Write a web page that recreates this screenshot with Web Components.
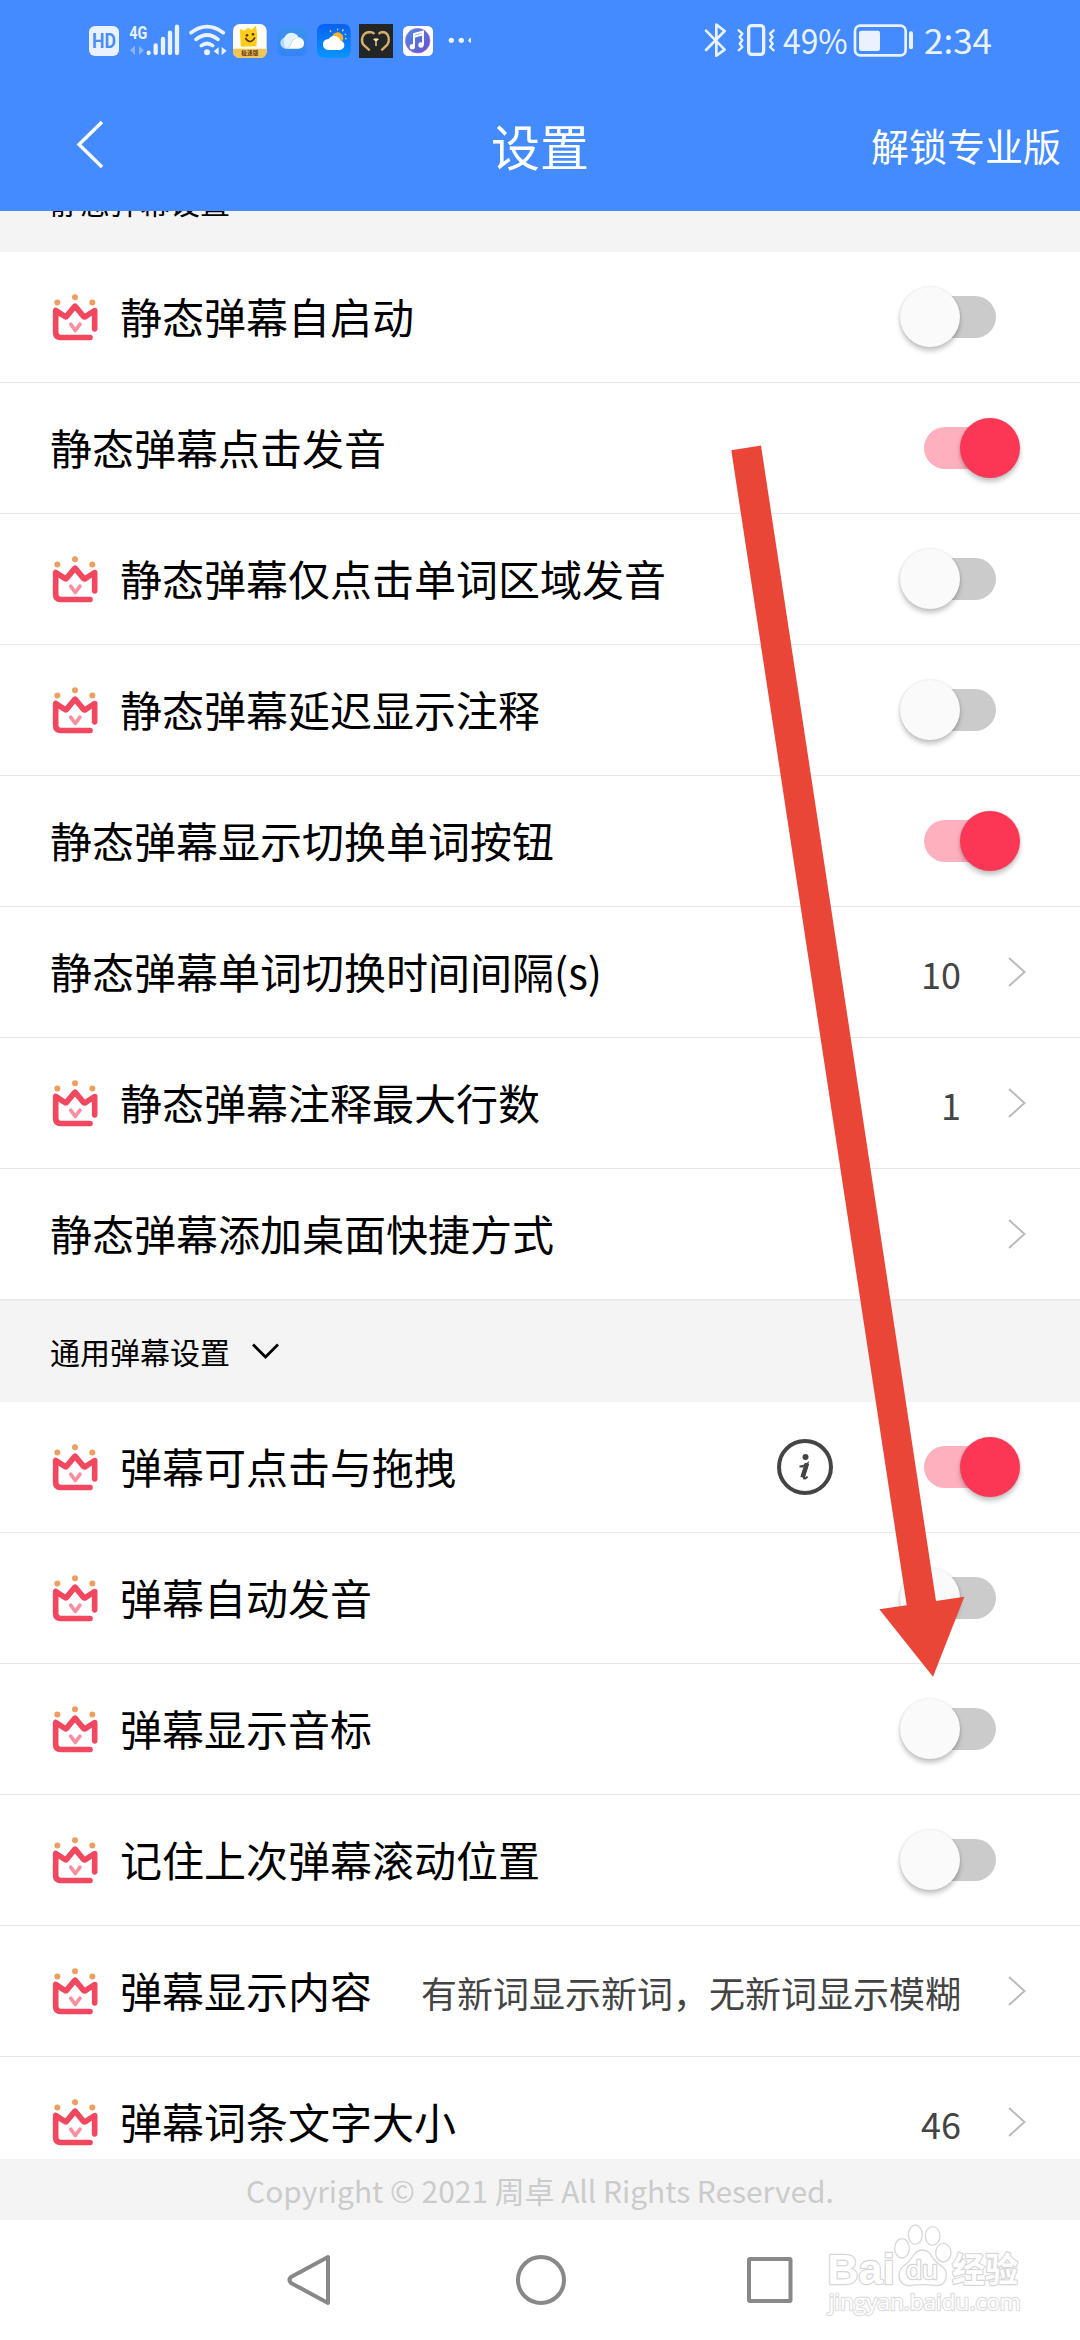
<!DOCTYPE html>
<html lang="zh-CN">
<head>
<meta charset="utf-8">
<title>设置</title>
<style>
html,body{margin:0;padding:0}
body{width:1080px;height:2340px;overflow:hidden;background:#fff;font-family:"Noto Sans CJK SC",sans-serif;color:#000}
</style>
</head>
<body>
<settings-app></settings-app>
<script>
function define(name, html, setup) {
  const tpl = document.createElement('template');
  tpl.innerHTML = html;
  customElements.define(name, class extends HTMLElement {
    connectedCallback() {
      if (this.shadowRoot) return;
      const root = this.attachShadow({mode: 'open'});
      root.append(tpl.content.cloneNode(true));
      if (setup) setup(this, root);
    }
  });
}

define('status-bar', `
<style>
:host{display:flex;height:90px;justify-content:space-between;padding:0 60px 0 70px;box-sizing:border-box;width:1080px}
svg{display:block;height:90px;flex:none}
text{font-family:Roboto,"Noto Sans CJK SC",sans-serif}
.l{width:420px}.r{width:330px}
</style>
<svg class="l" viewBox="0 0 1260 270">
  <defs>
    <linearGradient id="cl" x1="0" y1="0" x2="0" y2="1"><stop offset="0" stop-color="#3b93ef"/><stop offset="1" stop-color="#3484f7"/></linearGradient>
    <linearGradient id="we" x1="0" y1="0" x2="0" y2="1"><stop offset="0" stop-color="#0862f2"/><stop offset="1" stop-color="#0895fd"/></linearGradient>
    <linearGradient id="mu" x1="0" y1="0" x2="1" y2="1"><stop offset="0" stop-color="#4b8ee8"/><stop offset="1" stop-color="#6a50c8"/></linearGradient>
  </defs>
  <rect x="57" y="78" width="90" height="90" rx="18" fill="#e9f2fe"/>
  <text x="66" y="145" font-size="58" font-weight="700" fill="#4a8ff8" textLength="72" lengthAdjust="spacingAndGlyphs">HD</text>
  <text x="178" y="116" font-size="57" font-weight="700" fill="#e9f2fe" textLength="54" lengthAdjust="spacingAndGlyphs">4G</text>
  <path d="M180 150l15-13v28zM207 138v27l15-14z" fill="#86b5fb"/>
  <g stroke="#e9f2fe" stroke-width="13" stroke-linecap="round" fill="none">
    <path d="M236 158v1M257 136v23M279 117v42M300 98v61M321 80v79"/>
    <path d="M363 98q48-36 97 0M378 118q33-26 66 0M394 137q17-13 34 0" stroke-width="11"/>
  </g>
  <circle cx="411" cy="157" r="9" fill="#e9f2fe"/>
  <path d="M431 154l15-13v24zM455 141v25l15-14z" fill="#e9f2fe"/>
  <rect x="489" y="72" width="101" height="102" rx="20" fill="#fffdf5"/>
  <path d="M489 146h101v8q0 20-20 20h-61q-20 0-20-20z" fill="#f2c55b"/>
  <path d="M512 90l12 5 10-9 12 7 10-12 3 22-2 33-42 2z" fill="#ffcd18" stroke="#ffcd18" stroke-width="5" stroke-linejoin="round"/>
  <path d="M526 114q15 22 29-2" stroke="#5b3813" stroke-width="5" fill="none"/><circle cx="531" cy="106" r="4" fill="#5b3813"/><circle cx="549" cy="103" r="4" fill="#5b3813"/>
  <text x="514" y="166" font-size="17" font-weight="700" fill="#5b3813">极速版</text>
  <rect x="621" y="78" width="90" height="90" rx="18" fill="url(#cl)"/>
  <circle cx="648" cy="129" r="17" fill="#b9d9fb"/><path d="M645 146q18 0 20-20 8-12 23-14 14 5 14 18 0 16-18 16z" fill="#fff"/><path d="M642 118q4-20 22-20 18 1 22 15-18 3-23 16-3 13-16 17-6-12-5-28z" fill="#e4f1fe"/>
  <rect x="741" y="72" width="101" height="101" rx="20" fill="url(#we)"/>
  <circle cx="803" cy="114" r="17" fill="#fbb32a"/>
  <path d="M803 91v-5M783 96l-3-5M817 94l3-6M824 104l4-2M825 116h5" stroke="#e8d387" stroke-width="4"/>
  <path d="M775 150q-16-1-16-17 0-15 17-16 6-10 18-9 14 1 17 14 12 2 12 14-1 13-14 14z" fill="#fff"/>
  <rect x="867" y="72" width="102" height="102" fill="#242625"/>
  <path d="M903 151l-19-17q-6-9-3-21 5-16 22-17 10 0 14 6M930 102q4-6 12-6 14 1 18 17 2 12-4 21l-18 17" transform="translate(-4 0)" fill="none" stroke="#d4b06d" stroke-width="7"/>
  <path d="M909 118q9-7 18 0l-7 6v14h-4v-14z" fill="#f2dfae"/>
  <rect x="999" y="78" width="90" height="90" rx="16" fill="#fff"/>
  <circle cx="1043" cy="122" r="37" fill="url(#mu)" stroke="#bd6ee0" stroke-width="2"/>
  <path d="M1032 140v-38l27-7v39M1032 110l27-7" stroke="#fff" stroke-width="6" fill="none"/><circle cx="1027" cy="140" r="8" fill="#fff"/><circle cx="1053" cy="135" r="8" fill="#fff"/>
  <g fill="#e9f2fe"><circle cx="1144" cy="121" r="8"/><circle cx="1174" cy="121" r="8"/><path d="M1203 113q-8 2-8 8t8 8z"/></g>
</svg>
<svg class="r" viewBox="30 0 990 270">
  <g fill="none" stroke="#e9f2fe" stroke-linejoin="round" stroke-linecap="round">
    <path d="M78 92l56 57-25 18V74l25 19-56 57" stroke-width="8"/>
    <rect x="206" y="77" width="45" height="86" rx="9" stroke-width="10"/>
    <path d="M176 91l11 10-8 10 8 10-8 10 8 10-11 10M281 91l-11 10 8 10-8 10 8 10-8 10 11 10" stroke-width="7"/>
    <rect x="525" y="77" width="152" height="89" rx="16" stroke-width="8"/>
  </g>
  <rect x="537" y="92" width="63" height="61" rx="7" fill="#e9f2fe"/>
  <path d="M693 100v42" stroke="#e9f2fe" stroke-width="12" stroke-linecap="round"/>
  <text x="309" y="162" font-size="102" fill="#e9f2fe" textLength="194" lengthAdjust="spacingAndGlyphs" style="font-family:'Noto Sans CJK SC'">49%</text>
  <text x="732" y="162" font-size="102" fill="#e9f2fe" textLength="204" lengthAdjust="spacingAndGlyphs" style="font-family:'Noto Sans CJK SC'">2:34</text>
</svg>`);

define('nav-header', `
<style>
:host{display:grid;grid-template-columns:421px auto 1fr;align-items:center;height:121px;padding:0 19px 11px 70px;box-sizing:border-box;color:#fff}
svg{display:block}
.t{font-size:49px;line-height:60px}
.a{justify-self:end;font-size:38px;line-height:60px}
</style>
<svg width="40" height="54" viewBox="0 0 40 54"><path d="M32 4L9 26.500L32 49" fill="none" stroke="#fff" stroke-width="3.400"/></svg>
<span class="t"><slot></slot></span><span class="a"><slot name="action"></slot></span>`);

define('section-head', `
<style>
:host{display:flex;align-items:center;height:102px;padding:0 0 0 50px;box-sizing:border-box;background:#f4f4f4;font-size:30px;line-height:44px;flex:none;border-top:1px solid #ececec}
span{margin-top:-2px}
svg{margin-left:21px;margin-top:-1px}
</style>
<span><slot></slot></span>
<svg width="28" height="18" viewBox="0 0 28 18"><path d="M2 2.500l12.500 12.500L27 2.500" fill="none" stroke="#000" stroke-width="2.800"/></svg>`);

define('crown-icon', `
<style>:host{display:block;width:50px;height:50px;margin:1px 20px 0 1px;flex:none}svg{display:block}</style>
<svg width="50" height="50" viewBox="63 37.500 150 150">
<g fill="#ed9f62"><circle cx="82" cy="66" r="9"/><circle cx="135" cy="50" r="9"/><circle cx="187" cy="66" r="9"/></g>
<path d="M194 145V90l-29 19q-3 1-5-2l-25-30-25 30q-2 3-5 1L77 90v66q0 15 15 15h88" fill="none" stroke="#f2485f" stroke-width="17" stroke-linejoin="round" stroke-linecap="round"/>
<path d="M122 131l14 19 14-19" fill="none" stroke="#f990a1" stroke-width="11" stroke-linecap="round" stroke-linejoin="round"/></svg>`);

define('toggle-switch', `
<style>
:host{display:flex;align-items:center;width:72px;height:42px;border-radius:21px;background:#cbcbcb;margin-bottom:1px;flex:none}
i{width:60px;height:60px;border-radius:50%;background:#fafafa;flex:none;margin-left:-24px;box-shadow:0 4px 5px rgba(0,0,0,.22),0 0 3px rgba(0,0,0,.12)}
:host([on]){background:#ffb0be}
:host([on]) i{background:#fc3756;margin-left:36px}
</style><i></i>`);

define('info-icon', `
<style>:host{display:block;width:56px;height:56px;margin:0 91px 1px 0}svg{display:block}</style>
<svg width="56" height="56"><circle cx="28" cy="28" r="26" fill="none" stroke="#444" stroke-width="4"/>
<circle cx="28.500" cy="18" r="3" fill="#444"/><path d="M23 27.500q4-.5 7.500-3l-3.500 13q-.5 2.500 1 2 1.500-.5 2.500-2M22.500 27.500h4" fill="none" stroke="#444" stroke-width="2"/><path d="M30 24.500l-4.500 14" stroke="#444" stroke-width="4.500"/></svg>`);

define('setting-row', `
<style>
:host{display:flex;align-items:center;height:131px;box-sizing:border-box;border-bottom:1px solid #e8e8e8;padding-left:50px;flex:none;background:#fff}
.n{font-size:42px;line-height:62px;white-space:nowrap;flex:1;padding-bottom:2px;margin-left:0}
crown-icon + .n{margin-left:-1px}
.v{font-size:36px;line-height:54px;color:#444;white-space:nowrap;padding-top:1px}
.end{display:flex;align-items:center}
.end.sw{padding-right:84px}
.end.link{padding-right:53px}
.c{margin-left:46px;display:block;margin-bottom:1px}
</style>
<span class="n"><slot></slot></span><div class="end"></div>`, (el, root) => {
  if (el.hasAttribute('pro')) root.querySelector('.n').before(document.createElement('crown-icon'));
  const end = root.querySelector('.end');
  if (el.hasAttribute('info')) end.append(document.createElement('info-icon'));
  if (el.hasAttribute('toggle')) {
    end.classList.add('sw');
    const s = document.createElement('toggle-switch');
    if (el.getAttribute('toggle') === 'on') s.setAttribute('on', '');
    end.append(s);
  } else {
    end.classList.add('link');
    end.insertAdjacentHTML('beforeend', '<span class="v"></span><svg class="c" width="20" height="32" viewBox="0 0 20 32"><path d="M2 2l15.500 14L2 30" fill="none" stroke="#bbb" stroke-width="2"/></svg>');
    end.querySelector('.v').textContent = el.getAttribute('value') || '';
  }
});

define('copyright-bar', `
<style>:host{display:flex;height:61px;align-items:center;justify-content:center;background:#f4f4f4;color:#cbcbcb;font-size:29.900px;line-height:44px;flex:none;box-sizing:border-box}</style><span><slot></slot></span>`);

define('system-nav', `
<style>:host{display:flex;height:120px;justify-content:space-between;align-items:center;padding:0 285px 0 286px;background:#fff;flex:none}svg{display:block}</style>
<svg width="50" height="54" fill="none" stroke="#888" stroke-width="4"><path d="M42 4v46L5 30q-3-3 0-6z" stroke-linejoin="round"/></svg>
<svg width="54" height="54" fill="none" stroke="#888" stroke-width="4"><circle cx="27" cy="27" r="23"/></svg>
<svg width="50" height="54" fill="none" stroke="#888" stroke-width="4"><rect x="4" y="6" width="41.500" height="42" rx="1"/></svg>`);

define('pointer-arrow', `
<style>:host{position:absolute;left:0;top:0;width:1080px;height:2340px;pointer-events:none}svg{display:block}</style>
<svg width="1080" height="2340"><path d="M731.300 450.300L761 445.500L936 1601L964.300 1596.700L933 1676.700L879.300 1609.300L906.700 1605.300Z" fill="#e94638"/></svg>`);

define('water-mark', `
<style>:host{position:absolute;left:800px;top:2200px;width:280px;height:140px}svg{display:block}text{paint-order:stroke;stroke:#d6d6d6;stroke-width:7px;fill:#fff;stroke-linejoin:round}</style>
<svg width="280" height="140" viewBox="0 0 840 420">
<text x="82" y="252" font-size="128" font-weight="700" textLength="202" lengthAdjust="spacingAndGlyphs" style="font-family:'Liberation Sans'">Bai</text>
<g fill="#fff" stroke="#d8d8d8" stroke-width="4"><ellipse cx="306" cy="145" rx="22" ry="29"/><ellipse cx="346" cy="104" rx="21" ry="29"/><ellipse cx="398" cy="108" rx="22" ry="28"/><ellipse cx="430" cy="158" rx="23" ry="28"/>
<path d="M367 150q18 0 29 20 9 16 30 29 14 10 13 28-2 30-33 30-20-3-38-3t-37 3q-33 0-34-32 0-17 16-29 15-10 24-25 12-21 30-21z"/></g>
<text x="318" y="238" font-size="78" textLength="96" lengthAdjust="spacingAndGlyphs" style="font-family:'Liberation Sans'">du</text>
<text x="456" y="245" font-size="102" font-weight="700" textLength="198" lengthAdjust="spacingAndGlyphs" style="font-family:'Noto Sans CJK SC'">经验</text>
<text x="86" y="330" font-size="66" textLength="576" lengthAdjust="spacingAndGlyphs" style="font-family:'Open Sans';stroke:#dedede">jingyan.baidu.com</text>
</svg>`);

define('settings-app', `
<style>
:host{display:flex;flex-direction:column;width:1080px;height:2340px;position:relative;overflow:hidden}
.top{background:#438bff;height:211px;flex:none;position:relative}
.list{display:flex;flex-direction:column;height:1948px;overflow:hidden;flex:none}
.list>:first-child{margin-top:-61px}
</style>
<div class="top"><status-bar></status-bar><nav-header>设置<span slot="action">解锁专业版</span></nav-header></div>
<div class="list">
<section-head>静态弹幕设置</section-head>
<setting-row pro toggle="off">静态弹幕自启动</setting-row>
<setting-row toggle="on">静态弹幕点击发音</setting-row>
<setting-row pro toggle="off">静态弹幕仅点击单词区域发音</setting-row>
<setting-row pro toggle="off">静态弹幕延迟显示注释</setting-row>
<setting-row toggle="on">静态弹幕显示切换单词按钮</setting-row>
<setting-row value="10">静态弹幕单词切换时间间隔(s)</setting-row>
<setting-row pro value="1">静态弹幕注释最大行数</setting-row>
<setting-row>静态弹幕添加桌面快捷方式</setting-row>
<section-head>通用弹幕设置</section-head>
<setting-row pro info toggle="on">弹幕可点击与拖拽</setting-row>
<setting-row pro toggle="off">弹幕自动发音</setting-row>
<setting-row pro toggle="off">弹幕显示音标</setting-row>
<setting-row pro toggle="off">记住上次弹幕滚动位置</setting-row>
<setting-row pro value="有新词显示新词，无新词显示模糊">弹幕显示内容</setting-row>
<setting-row pro value="46">弹幕词条文字大小</setting-row>
</div>
<copyright-bar>Copyright © 2021 周卓 All Rights Reserved.</copyright-bar>
<system-nav></system-nav>
<pointer-arrow></pointer-arrow>
<water-mark></water-mark>`);
</script>
</body>
</html>
